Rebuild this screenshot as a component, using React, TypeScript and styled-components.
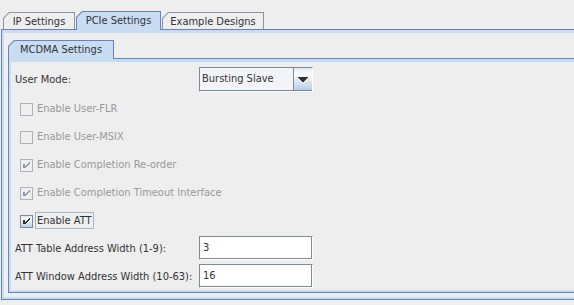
import React from "react";
import styled, { createGlobalStyle } from "styled-components";

const GlobalStyle = createGlobalStyle`
  html, body {
    margin: 0;
    padding: 0;
    background: #eeeeee;
    overflow: hidden;
  }
  body {
    font-family: "DejaVu Sans Condensed", "DejaVu Sans", sans-serif;
    font-stretch: condensed;
    font-size: 11px;
    color: #333333;
  }
`;

const Window = styled.div`
  width: 600px;
  height: 305px;
  padding: 11px 0 0 1px;
  box-sizing: border-box;
`;

const TabStrip = styled.div<{ $inset: number }>`
  display: flex;
  align-items: flex-end;
  height: 18px;
  padding-left: ${(p) => p.$inset}px;
  gap: 1px;
`;

const Tab = styled.div<{ $selected?: boolean; $width: number }>`
  position: relative;
  z-index: ${(p) => (p.$selected ? 1 : 0)};
  width: ${(p) => p.$width}px;
  height: ${(p) => (p.$selected ? 19 : 17)}px;
  margin-bottom: ${(p) => (p.$selected ? -1 : 0)}px;
  padding: 1px 1px 0 1px;
  box-sizing: border-box;
  background: ${(p) => (p.$selected ? "#6382bf" : "#8796a5")};
  clip-path: polygon(6px 0, 100% 0, 100% 100%, 0 100%, 0 6px);
`;

const TabFace = styled.div<{ $selected?: boolean }>`
  height: 100%;
  display: flex;
  align-items: center;
  justify-content: center;
  padding-bottom: ${(p) => (p.$selected ? 1 : 0)}px;
  box-sizing: border-box;
  background: ${(p) => (p.$selected ? "#c8ddf2" : "#eeeeee")};
  clip-path: polygon(5.4px 0, 100% 0, 100% 100%, 0 100%, 0 5.4px);
  white-space: nowrap;
  line-height: 1;
`;

const TabPanel = styled.div<{ $pad: string }>`
  border: 1px solid #6382bf;
  box-shadow: inset 0 3px 0 #c8ddf2, inset 2px 0 0 #c8ddf2, inset -2px 0 0 #c8ddf2,
    inset 0 -2px 0 #c8ddf2;
  padding: ${(p) => p.$pad};
`;

const Form = styled.div`
  display: flex;
  flex-direction: column;
`;

const FieldRow = styled.div<{ $top: number; $height: number }>`
  display: flex;
  align-items: center;
  margin-top: ${(p) => p.$top}px;
  height: ${(p) => p.$height}px;
`;

const FieldLabel = styled.span`
  width: 184px;
  white-space: nowrap;
`;

const Combo = styled.div`
  display: flex;
  width: 114px;
  height: 25px;
  box-sizing: border-box;
  border: 1px solid;
  border-color: #7a8a99 #ffffff #ffffff #7a8a99;
  box-shadow: inset -1px -1px 0 #7a8a99;
  background: #f2f4f7;
`;

const ComboValue = styled.div`
  flex: 1;
  display: flex;
  align-items: center;
  padding-left: 2px;
  padding-bottom: 2px;
  white-space: nowrap;
`;

const ComboButton = styled.div`
  width: 18px;
  margin-bottom: 1px;
  display: flex;
  align-items: center;
  justify-content: center;
  border-left: 1px solid #7a8a99;
  background: linear-gradient(
    to bottom,
    #dde8f3 0%,
    #ffffff 30%,
    #dde8f3 60%,
    #b8cfe5 100%
  );
`;

const CheckRow = styled.div`
  display: flex;
  align-items: center;
  height: 28px;
  padding: 1px 0 0 5px;
  box-sizing: border-box;
`;

const Box = styled.span<{ $enabled: boolean }>`
  position: relative;
  width: 13px;
  height: 13px;
  box-sizing: border-box;
  border: 1px solid ${(p) => (p.$enabled ? "#7a8a99" : "#a9b4bf")};
  background: ${(p) =>
    p.$enabled
      ? "linear-gradient(to bottom, #dde8f3 0%, #ffffff 30%, #dde8f3 60%, #b8cfe5 100%)"
      : "#eeeeee"};
  & > svg {
    position: absolute;
    top: -1px;
    left: -1px;
  }
`;

const CheckText = styled.span<{ $enabled: boolean; $focused?: boolean }>`
  margin-left: 2px;
  margin-top: -2px;
  height: 17px;
  box-sizing: border-box;
  display: flex;
  align-items: center;
  padding: 0 1px 1px 1px;
  border: 1px solid ${(p) => (p.$focused ? "#a3b8cc" : "transparent")};
  color: ${(p) => (p.$enabled ? "#333333" : "#999999")};
  white-space: nowrap;
`;

const TextField = styled.div`
  width: 114px;
  height: 24px;
  box-sizing: border-box;
  display: flex;
  align-items: center;
  padding: 0 0 1px 3px;
  background: #ffffff;
  border: 1px solid;
  border-color: #7a8a99 #ffffff #ffffff #7a8a99;
  box-shadow: inset -1px -1px 0 #7a8a99;
`;

const CheckMark = ({ color }: { color: string }) => (
  <svg width="13" height="13" viewBox="0 0 13 13" shapeRendering="crispEdges">
    <path
      fill={color}
      d="M3 5h2v4H3z M9 3h1v2H9z M8 4h1v2H8z M7 5h1v2H7z M6 6h1v2H6z M5 7h1v2H5z"
    />
  </svg>
);

const ArrowDown = () => (
  <svg width="10" height="5" viewBox="0 0 10 5" shapeRendering="crispEdges">
    <path
      fill="#333333"
      d="M0 0h10v1H0z M1 1h8v1H1z M2 2h6v1H2z M3 3h4v1H3z M4 4h2v1H4z"
    />
  </svg>
);

type CheckOption = { label: string; checked: boolean; enabled: boolean; focused?: boolean };

const options: CheckOption[] = [
  { label: "Enable User-FLR", checked: false, enabled: false },
  { label: "Enable User-MSIX", checked: false, enabled: false },
  { label: "Enable Completion Re-order", checked: true, enabled: false },
  { label: "Enable Completion Timeout Interface", checked: true, enabled: false },
  { label: "Enable ATT", checked: true, enabled: true, focused: true },
];

export default function App() {
  return (
    <>
      <GlobalStyle />
      <Window>
        <TabStrip $inset={2}>
          <Tab $width={72}>
            <TabFace>IP Settings</TabFace>
          </Tab>
          <Tab $selected $width={85}>
            <TabFace $selected>PCIe Settings</TabFace>
          </Tab>
          <Tab $width={102}>
            <TabFace>Example Designs</TabFace>
          </Tab>
        </TabStrip>
        <TabPanel $pad="10px 0 6px 6px">
          <TabStrip $inset={0}>
            <Tab $selected $width={106}>
              <TabFace $selected>MCDMA Settings</TabFace>
            </Tab>
          </TabStrip>
          <TabPanel $pad="8px 0 4px 6px">
            <Form>
              <FieldRow $top={0} $height={25}>
                <FieldLabel>User Mode:</FieldLabel>
                <Combo>
                  <ComboValue>Bursting Slave</ComboValue>
                  <ComboButton>
                    <ArrowDown />
                  </ComboButton>
                </Combo>
              </FieldRow>
              <div style={{ height: 3 }} />
              {options.map((o) => (
                <CheckRow key={o.label}>
                  <Box $enabled={o.enabled}>
                    {o.checked && <CheckMark color={o.enabled ? "#333333" : "#8a9bb0"} />}
                  </Box>
                  <CheckText $enabled={o.enabled} $focused={o.focused}>
                    {o.label}
                  </CheckText>
                </CheckRow>
              ))}
              <FieldRow $top={1} $height={24}>
                <FieldLabel>ATT Table Address Width (1-9):</FieldLabel>
                <TextField>3</TextField>
              </FieldRow>
              <FieldRow $top={4} $height={24}>
                <FieldLabel>ATT Window Address Width (10-63):</FieldLabel>
                <TextField>16</TextField>
              </FieldRow>
            </Form>
          </TabPanel>
        </TabPanel>
      </Window>
    </>
  );
}
